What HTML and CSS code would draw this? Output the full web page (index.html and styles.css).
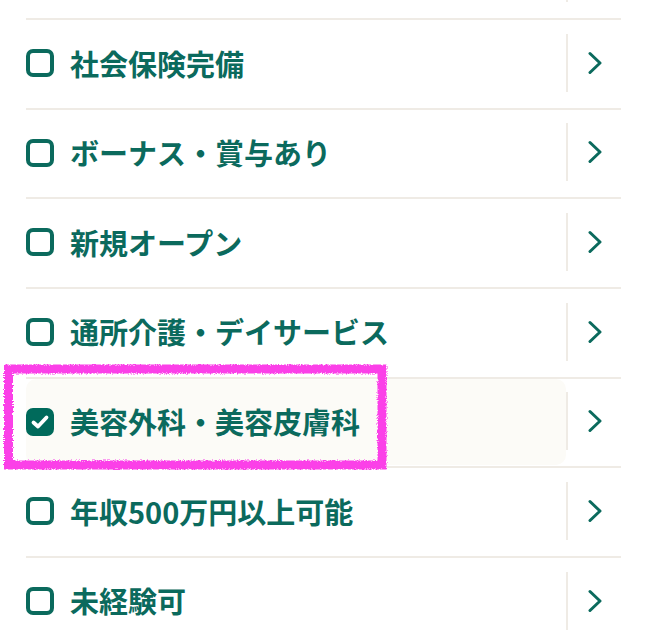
FILE: index.html
```html
<!DOCTYPE html>
<html>
  <head>
    <title>こだわり条件</title>
    <meta charset="utf-8">
    <link rel="stylesheet" href="styles.css">
  </head>
  <body>
    <ul class="conditions">
      <!-- previous item, scrolled out of view -->
      <li class="condition">
        <label class="condition-label"></label>
        <button class="more"><svg width="14" height="24" viewBox="0 0 14 24"><polyline points="2,2.5 12,12 2,21.5"/></svg></button>
      </li>
      <li class="condition">
        <label class="condition-label"><span class="check"></span><span class="name">社会保険完備</span></label>
        <button class="more"><svg width="14" height="24" viewBox="0 0 14 24"><polyline points="2,2.5 12,12 2,21.5"/></svg></button>
      </li>
      <li class="condition">
        <label class="condition-label"><span class="check"></span><span class="name">ボーナス・賞与あり</span></label>
        <button class="more"><svg width="14" height="24" viewBox="0 0 14 24"><polyline points="2,2.5 12,12 2,21.5"/></svg></button>
      </li>
      <li class="condition">
        <label class="condition-label"><span class="check"></span><span class="name">新規オープン</span></label>
        <button class="more"><svg width="14" height="24" viewBox="0 0 14 24"><polyline points="2,2.5 12,12 2,21.5"/></svg></button>
      </li>
      <li class="condition">
        <label class="condition-label"><span class="check"></span><span class="name">通所介護・デイサービス</span></label>
        <button class="more"><svg width="14" height="24" viewBox="0 0 14 24"><polyline points="2,2.5 12,12 2,21.5"/></svg></button>
      </li>
      <li class="condition is-checked">
        <label class="condition-label">
          <span class="check"><svg width="20" height="16" viewBox="0 0 20 16"><polyline points="3.5,8.5 8,12.5 16.5,3.5"/></svg></span>
          <span class="name">美容外科・美容皮膚科</span>
        </label>
        <button class="more"><svg width="14" height="24" viewBox="0 0 14 24"><polyline points="2,2.5 12,12 2,21.5"/></svg></button>
      </li>
      <li class="condition">
        <label class="condition-label"><span class="check"></span><span class="name">年収500万円以上可能</span></label>
        <button class="more"><svg width="14" height="24" viewBox="0 0 14 24"><polyline points="2,2.5 12,12 2,21.5"/></svg></button>
      </li>
      <li class="condition">
        <label class="condition-label"><span class="check"></span><span class="name">未経験可</span></label>
        <button class="more"><svg width="14" height="24" viewBox="0 0 14 24"><polyline points="2,2.5 12,12 2,21.5"/></svg></button>
      </li>
    </ul>

    <!-- marker drawn over the selected row -->
    <svg class="marker" width="396" height="120" viewBox="0 0 396 120">
      <defs>
        <filter id="rough" x="-5%" y="-5%" width="110%" height="110%">
          <feTurbulence type="fractalNoise" baseFrequency="0.8" numOctaves="2" seed="3"/>
          <feDisplacementMap in="SourceGraphic" scale="4"/>
        </filter>
      </defs>
      <rect x="8.5" y="11" width="373.5" height="96" filter="url(#rough)"/>
    </svg>
  </body>
</html>
```

FILE: styles.css
```css
body {
  margin: 0;
  background: #fff;
  font-family: "Noto Sans CJK JP", "Noto Sans", sans-serif;
  color: #0b6a5d;
  overflow: hidden;
}

.conditions {
  list-style: none;
  margin: -69.67px 0 0 26px;
  padding: 0;
  width: 595px;
}

.condition {
  display: flex;
  align-items: flex-start;
  height: 89.67px;
  box-sizing: border-box;
  border-bottom: 2px solid #efebe5;
}

.condition-label {
  flex: 1;
  display: flex;
  align-items: center;
  gap: 16px;
  height: 86px;
  border-radius: 10px;
}

.is-checked .condition-label {
  background: #fcfbf7;
}

.check {
  width: 28px;
  height: 28px;
  box-sizing: border-box;
  border: 4px solid #0b6a5d;
  border-radius: 7px;
  display: flex;
  align-items: center;
  justify-content: center;
  flex-shrink: 0;
}

.is-checked .check {
  background: #006a5b;
  border-color: #006a5b;
}

.check svg polyline {
  fill: none;
  stroke: #fff;
  stroke-width: 3.8;
  stroke-linecap: round;
  stroke-linejoin: round;
}

.name {
  font-size: 29px;
  font-weight: 700;
  line-height: 1;
  white-space: nowrap;
}

.more {
  align-self: center;
  width: 55px;
  height: 58px;
  margin-top: -2px;
  padding: 0;
  border: 0;
  border-left: 2px solid #efebe5;
  background: none;
  display: flex;
  align-items: center;
  justify-content: center;
}

.more polyline {
  fill: none;
  stroke: #0b6a5d;
  stroke-width: 3;
  stroke-linecap: round;
  stroke-linejoin: round;
}

.marker {
  position: absolute;
  left: 0;
  top: 358px;
  pointer-events: none;
}

.marker rect {
  fill: none;
  stroke: #fb3fe8;
  stroke-width: 9;
}
```
